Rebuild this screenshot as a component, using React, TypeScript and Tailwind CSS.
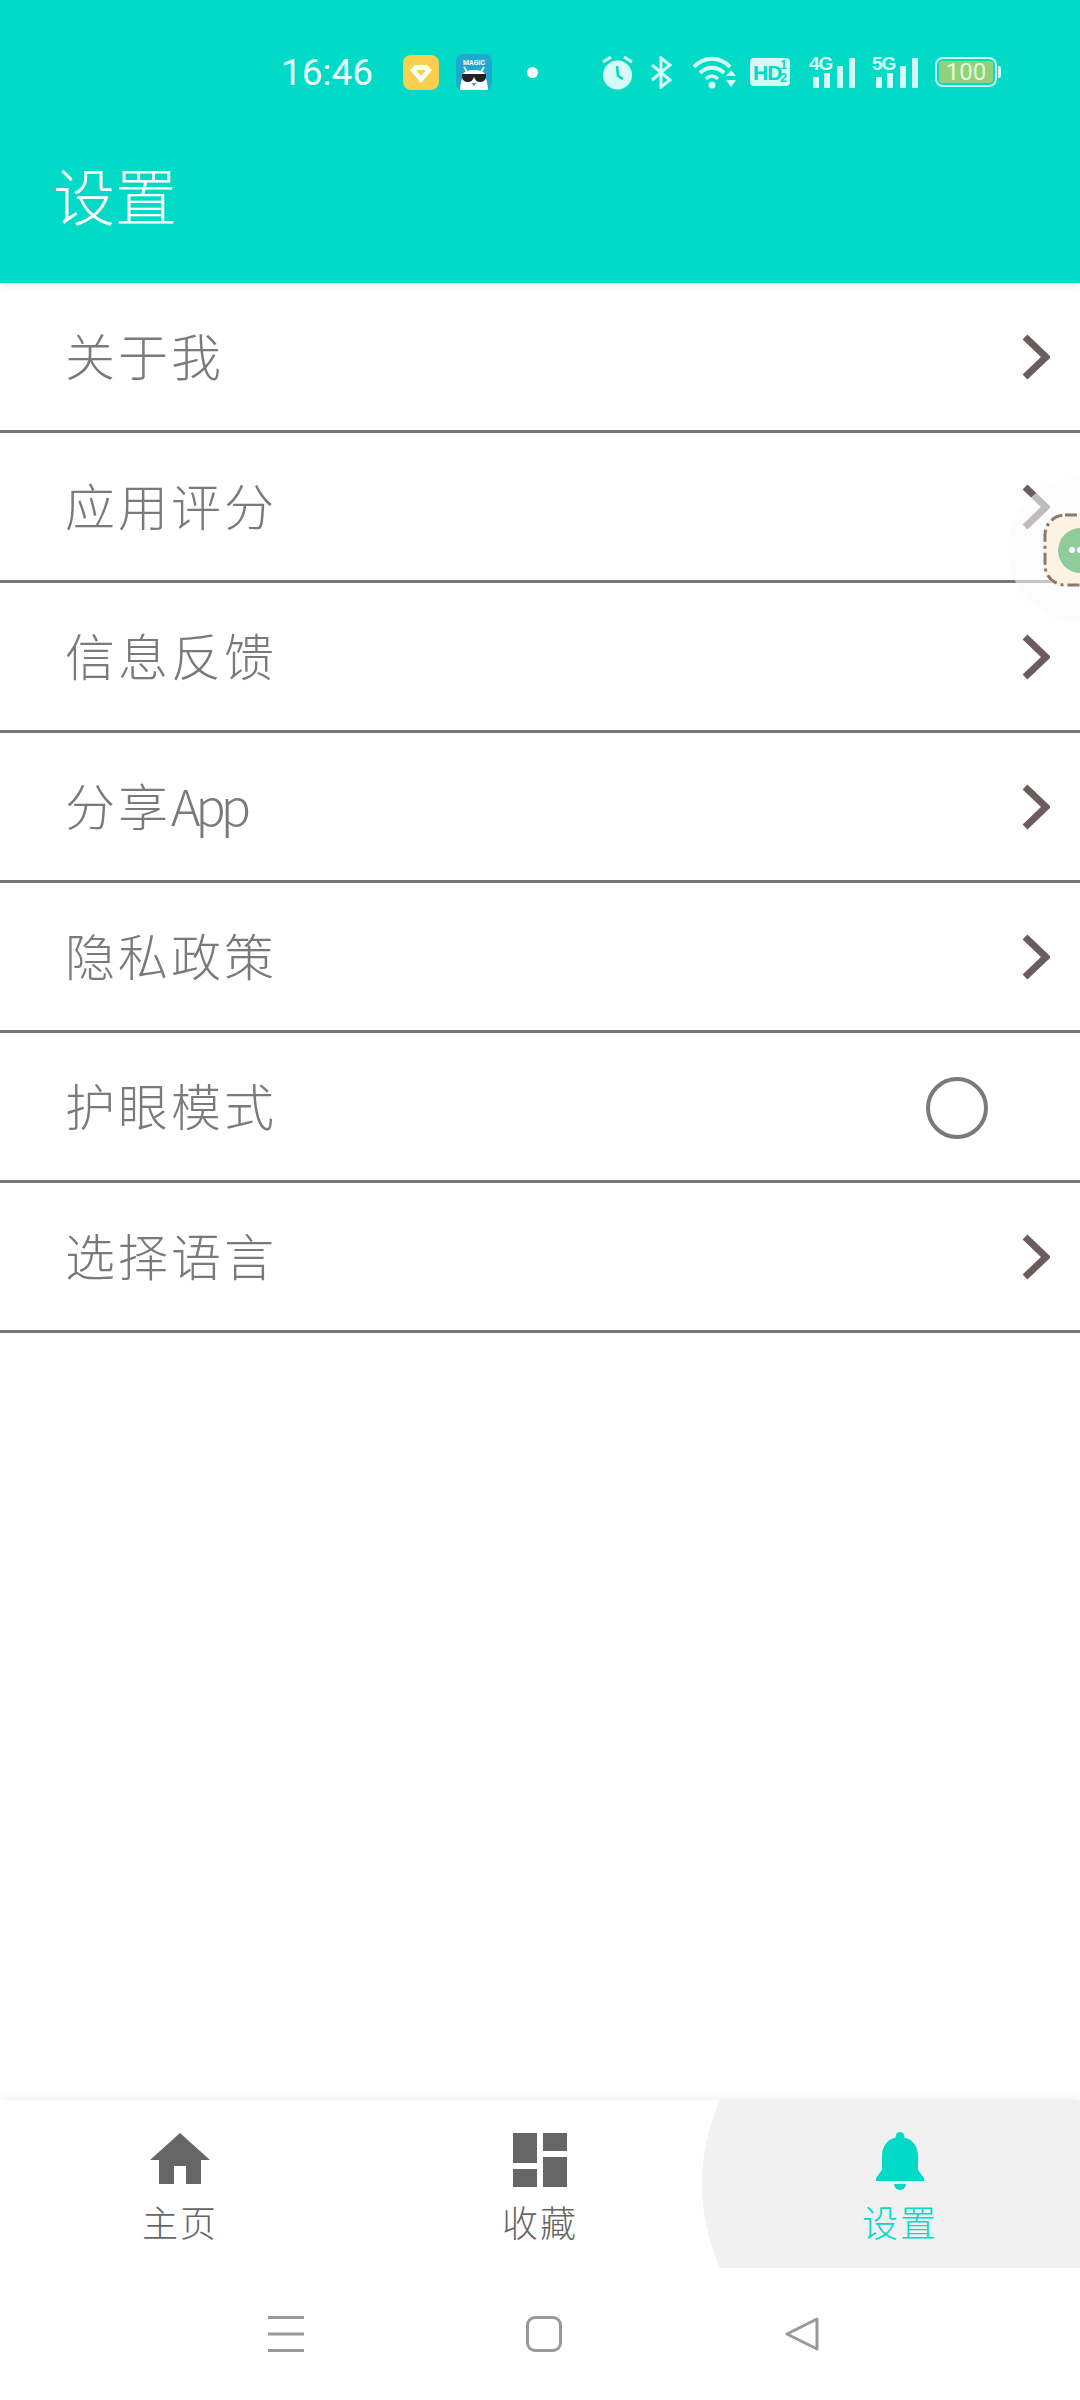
import React from "react";

const cjk = { fontFamily: '"Noto Sans CJK SC", sans-serif' };

const rows = ["关于我", "应用评分", "信息反馈", "分享App", "隐私政策", "护眼模式", "选择语言"];

function Chevron() {
  return (
    <svg width="28" height="46" viewBox="0 0 28 46" className="block">
      <path d="M3 3 L24 23 L3 43" fill="none" stroke="#6b5d5d" strokeWidth="7" />
    </svg>
  );
}

function Row({ label }: { label: string }) {
  const toggle = label === "护眼模式";
  const app = label.endsWith("App");
  return (
    <div className="flex h-[150px] items-center justify-between border-b-[3px] border-[#777777] pl-[65px] pr-[30px]">
      <span className="pb-[5px] text-[50px] font-light tracking-[3px] text-[#7a7a7a]" style={cjk}>
        {app ? (
          <>
            分享<span className="tracking-[-5px]">App</span>
          </>
        ) : (
          label
        )}
      </span>
      {toggle ? (
        <div className="mr-[62px] mt-[2px] h-[62px] w-[62px] rounded-full border-[4px] border-[#7a7a7a]" />
      ) : (
        <Chevron />
      )}
    </div>
  );
}

function Signal({ label, className, color }: { label: string; className: string; color: string }) {
  return (
    <div className={`relative h-[32px] w-[46px] ${className}`}>
      <span
        className="absolute left-0 top-[-2px] text-[19px] font-bold leading-none tracking-[-1px] text-[#d6faf6]"
        style={{ fontFamily: '"Liberation Sans", sans-serif' }}
      >
        {label}
      </span>
      <svg width="46" height="32" viewBox="0 0 46 32" className="block">
        <rect x="4" y="21" width="6" height="11" fill={color} />
        <rect x="15" y="17" width="6" height="15" fill={color} />
        <rect x="28" y="10" width="6" height="22" fill={color} />
        <rect x="40" y="2" width="6" height="30" fill={color} />
      </svg>
    </div>
  );
}

function StatusBar() {
  const c = "#d6faf6";
  return (
    <div className="mt-[50px] flex h-[44px] items-center pl-[281px]">
      <span className="w-[92px] text-[37px] leading-none text-[#eafffb]" style={{ fontFamily: "Roboto, sans-serif" }}>
        16:46
      </span>
      <svg width="36" height="35" viewBox="0 0 36 35" className="ml-[30px]">
        <rect width="36" height="35" rx="8" fill="#f8cf4e" />
        <path d="M7 15 L12 10 H24 L29 15 L18 28 Z" fill="#fff" />
        <path d="M13 15 H23 L18 21 Z" fill="#f8cf4e" />
      </svg>
      <svg width="36" height="36" viewBox="0 0 36 36" className="ml-[17px]">
        <rect width="36" height="36" rx="7" fill="#1fa9cf" />
        <text x="18" y="11" textAnchor="middle" fontSize="7" fontWeight="700" fill="#fff" fontFamily="Roboto, sans-serif">MAGIC</text>
        <path d="M8 13 L11 18 M28 13 L25 18" stroke="#fff" strokeWidth="1.6" />
        <path d="M4 36 C4 30 6 26 6 24 C6 18 11 16 18 16 C25 16 30 18 30 24 C30 26 32 30 32 36 Z" fill="#fff" />
        <path d="M6 20 H30 V23 C30 26 27 28 24 28 C21 28 19 26 18 23 C17 26 15 28 12 28 C9 28 6 26 6 23 Z" fill="#222" />
        <path d="M15.5 29 H20.5 L18 32 Z" fill="#1fa9cf" />
      </svg>
      <div className="ml-[35px] h-[11px] w-[11px] rounded-full bg-white" />
      <svg width="32" height="35" viewBox="0 0 32 35" className="ml-[64px]">
        <circle cx="15.5" cy="20" r="14.5" fill={c} />
        <path d="M1 7 L9 2 M30 7 L22 2" stroke={c} strokeWidth="3" />
        <path d="M15 11 L16 21 L21 24" fill="none" stroke="#00dac6" strokeWidth="2.6" />
      </svg>
      <svg width="21" height="33" viewBox="0 0 21 33" className="ml-[17px]">
        <path d="M1 9 L19 24 L10 31 V2 L19 9 L1 24" fill="none" stroke={c} strokeWidth="3" />
      </svg>
      <svg width="44" height="34" viewBox="0 0 44 34" className="ml-[20px]">
        <path d="M2 12 C12 1 28 1 38 12" fill="none" stroke={c} strokeWidth="4" />
        <path d="M8 18 C15 11 25 11 32 18" fill="none" stroke={c} strokeWidth="4" />
        <path d="M14 24 C18 20 22 20 26 24" fill="none" stroke={c} strokeWidth="3.5" />
        <circle cx="20" cy="30" r="3.5" fill={c} />
        <path d="M34 21 L39 15 L44 21 Z M34 25 H44 L39 32 Z" fill={c} />
      </svg>
      <div className="relative ml-[14px] flex h-[28px] w-[40px] items-center rounded-[4px] bg-[#d6faf6]">
        <span
          className="pl-[3px] text-[21px] font-bold leading-none tracking-[-1px] text-[#00dac6]"
          style={{ fontFamily: '"Liberation Sans", sans-serif' }}
        >
          HD
        </span>
        <span
          className="absolute right-[3px] top-[1px] text-center text-[12px] font-bold leading-[13px] text-[#00dac6]"
          style={{ fontFamily: '"Liberation Sans", sans-serif' }}
        >
          1<br />2
        </span>
      </div>
      <Signal label="4G" className="ml-[19px]" color={c} />
      <Signal label="5G" className="ml-[17px]" color={c} />
      <div className="ml-[17px] flex h-[30px] w-[62px] items-center rounded-[8px] border-[2px] border-[#c9f8f3] p-[2px]">
        <div className="flex h-full w-full items-center justify-center rounded-[3px] bg-[#8fd27a]">
          <span className="text-[24px] leading-none text-[#e6f8d8]" style={{ fontFamily: "Roboto, sans-serif" }}>
            100
          </span>
        </div>
      </div>
      <div className="ml-[1px] h-[12px] w-[3px] rounded-r-[2px] bg-[#c9f8f3]" />
    </div>
  );
}

function Tab({ label, active, children }: { label: string; active?: boolean; children: React.ReactNode }) {
  return (
    <div className="relative z-10 flex flex-col items-center pt-[24px]">
      {children}
      <span
        className={`text-[36px] font-light leading-[50px] tracking-[2px] ${active ? "text-[#00dac6]" : "text-[#666666]"}`}
        style={cjk}
      >
        {label}
      </span>
    </div>
  );
}

export default function App() {
  return (
    <div className="relative flex h-[2400px] w-[1080px] flex-col overflow-hidden bg-white">
      <header className="z-10 h-[283px] bg-[#00dac6] shadow-[0_2px_6px_rgba(0,0,0,0.12)]">
        <StatusBar />
        <h1 className="mt-[60px] pl-[53px] text-[62px] font-light leading-[80px] text-white" style={cjk}>
          设置
        </h1>
      </header>

      <main className="flex-1">
        {rows.map((r) => (
          <Row key={r} label={r} />
        ))}
      </main>

      <nav className="relative grid h-[168px] grid-cols-3 overflow-hidden bg-white shadow-[0_-3px_8px_rgba(0,0,0,0.05)]">
        <div className="absolute left-[702px] top-[-121px] h-[410px] w-[410px] rounded-full bg-[#f1f1f1]" />
        <Tab label="主页">
          <svg width="72" height="72" viewBox="0 0 24 24" fill="#666666" className="block">
            <path d="M10 20v-6h4v6h5v-8h3L12 3 2 12h3v8z" />
          </svg>
        </Tab>
        <Tab label="收藏">
          <svg width="72" height="72" viewBox="0 0 24 24" fill="#666666" className="block">
            <path d="M3 13h8V3H3v10zm0 8h8v-6H3v6zm10 0h8V11h-8v10zm0-18v6h8V3h-8z" />
          </svg>
        </Tab>
        <Tab label="设置" active>
          <svg width="72" height="72" viewBox="-12 -8 72 72" fill="#00dac6" className="block">
            <circle cx="24" cy="4.3" r="4.3" />
            <path d="M24 5 C13 5 6 13 6 24 L6 38 L0 46 L0 49 L48 49 L48 46 L42 38 L42 24 C42 13 35 5 24 5 Z" />
            <path d="M18 52 H30 A6 6 0 0 1 18 52 Z" />
          </svg>
        </Tab>
      </nav>

      <div className="z-10 flex h-[132px] items-start gap-[222px] bg-white pl-[268px] pt-[48px]">
        <svg width="36" height="36" viewBox="0 0 36 36" className="block">
          <path d="M0 1.5 H36 M0 18 H36 M0 34.5 H36" stroke="#999999" strokeWidth="3" />
        </svg>
        <div className="h-[36px] w-[36px] rounded-[9px] border-[3px] border-[#999999]" />
        <svg width="36" height="36" viewBox="0 0 36 36" className="block">
          <path d="M33 3 L3 18 L33 33 Z" fill="none" stroke="#999999" strokeWidth="3" strokeLinejoin="round" />
        </svg>
      </div>

      {/* floating assistant ball */}
      <div className="absolute left-[1008px] top-[478px] z-20 h-[144px] w-[144px] rounded-full bg-[#fafafa]/60">
        <div className="absolute left-[35px] top-[35px] flex h-[74px] w-[74px] items-center justify-center rounded-[22px] bg-[#fdf3e4]">
          <svg width="74" height="74" viewBox="0 0 74 74" className="absolute left-0 top-0">
            <rect x="2" y="2" width="70" height="70" rx="20" fill="none" stroke="#8a7a70" strokeWidth="3" strokeDasharray="12 4 3 4" />
          </svg>
          <div className="flex h-[45px] w-[45px] items-center justify-center gap-[2px] rounded-full bg-[#8fcb9b]">
            <span className="h-[6px] w-[6px] rounded-full bg-white" />
            <span className="h-[6px] w-[6px] rounded-full bg-white" />
            <span className="h-[6px] w-[6px] rounded-full bg-white" />
          </div>
        </div>
      </div>
    </div>
  );
}
